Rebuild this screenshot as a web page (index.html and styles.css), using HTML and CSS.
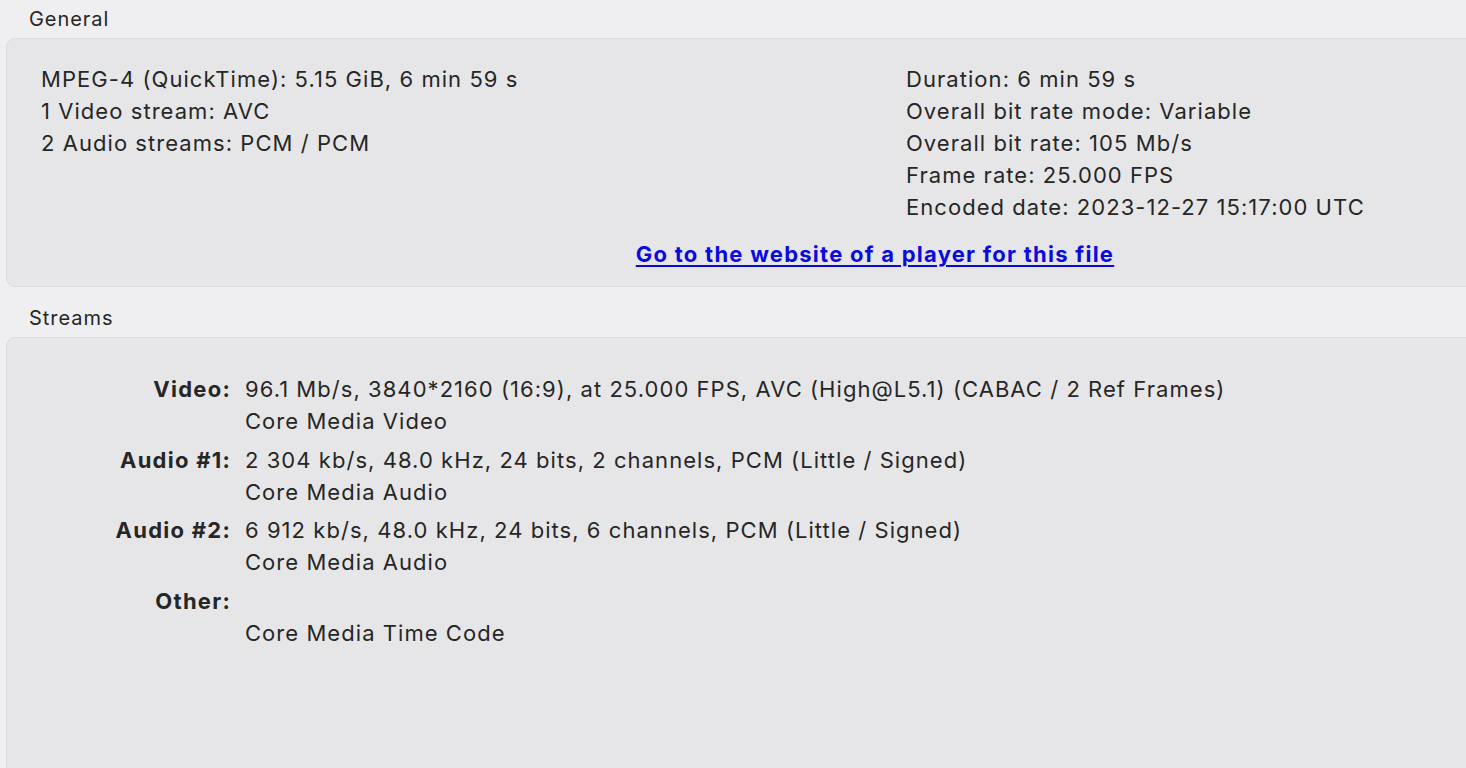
FILE: index.html
```html
<!DOCTYPE html>
<html>
<head>
<meta charset="utf-8">
<link rel="stylesheet" href="styles.css">
</head>
<body>
<div class="page">
  <div class="section-title first">General</div>
  <div class="panel general">
    <div class="cols">
      <div class="col">
        <div class="line">MPEG-4 (QuickTime): 5.15 GiB, 6 min 59 s</div>
        <div class="line">1 Video stream: AVC</div>
        <div class="line">2 Audio streams: PCM / PCM</div>
      </div>
      <div class="col">
        <div class="line">Duration: 6 min 59 s</div>
        <div class="line">Overall bit rate mode: Variable</div>
        <div class="line">Overall bit rate: 105 Mb/s</div>
        <div class="line">Frame rate: 25.000 FPS</div>
        <div class="line">Encoded date: 2023-12-27 15:17:00 UTC</div>
      </div>
    </div>
    <div class="link-row"><a class="player-link" href="#">Go to the website of a player for this file</a></div>
  </div>
  <div class="section-title">Streams</div>
  <div class="panel streams">
    <div class="stream">
      <div class="label">Video:</div>
      <div class="value">
        <div class="line">96.1 Mb/s, 3840*2160 (16:9), at 25.000 FPS, AVC (High@L5.1) (CABAC / 2 Ref Frames)</div>
        <div class="line">Core Media Video</div>
      </div>
    </div>
    <div class="stream">
      <div class="label">Audio #1:</div>
      <div class="value">
        <div class="line">2 304 kb/s, 48.0 kHz, 24 bits, 2 channels, PCM (Little / Signed)</div>
        <div class="line">Core Media Audio</div>
      </div>
    </div>
    <div class="stream">
      <div class="label">Audio #2:</div>
      <div class="value">
        <div class="line">6 912 kb/s, 48.0 kHz, 24 bits, 6 channels, PCM (Little / Signed)</div>
        <div class="line">Core Media Audio</div>
      </div>
    </div>
    <div class="stream">
      <div class="label">Other:</div>
      <div class="value">
        <div class="line">&nbsp;</div>
        <div class="line">Core Media Time Code</div>
      </div>
    </div>
  </div>
</div>
</body>
</html>
```

FILE: styles.css
```css
html, body {
  margin: 0;
  padding: 0;
  height: 100%;
  overflow: hidden;
}
body {
  background: #efeff1;
  font-family: Inter, "Noto Sans", sans-serif;
  color: #262626;
  font-size: 22px;
  letter-spacing: 1.05px;
}
.page {
  width: 1760px;
}
.section-title {
  height: 38px;
  line-height: 38px;
  padding-left: 29px;
  font-size: 20px;
  letter-spacing: 0.95px;
  margin-top: 12px;
}
.section-title.first {
  margin-top: 0;
}
.panel {
  margin-left: 6px;
  width: 1738px;
  box-sizing: border-box;
  background: #e6e6e8;
  border: 1px solid #dcdcde;
  border-radius: 9px;
}
.general {
  padding: 24px 0 16px 34px;
}
.cols {
  display: grid;
  grid-template-columns: 865px 1fr;
}
.line {
  height: 32px;
  line-height: 32px;
  white-space: nowrap;
}
.link-row {
  display: flex;
  justify-content: center;
  margin-top: 15px;
  margin-left: -34px;
  line-height: 32px;
}
.player-link {
  color: #0a0ae0;
  font-weight: 700;
  letter-spacing: 1.25px;
  text-decoration: underline;
  text-underline-offset: 3px;
  text-decoration-thickness: 2px;
}
.streams {
  padding-top: 35px;
  height: 500px;
}
.stream {
  display: grid;
  grid-template-columns: 224px 1fr;
  column-gap: 14px;
  margin-bottom: 6.5px;
}
.label {
  text-align: right;
  font-weight: 700;
  letter-spacing: 1.25px;
  line-height: 32px;
  white-space: nowrap;
}
```
